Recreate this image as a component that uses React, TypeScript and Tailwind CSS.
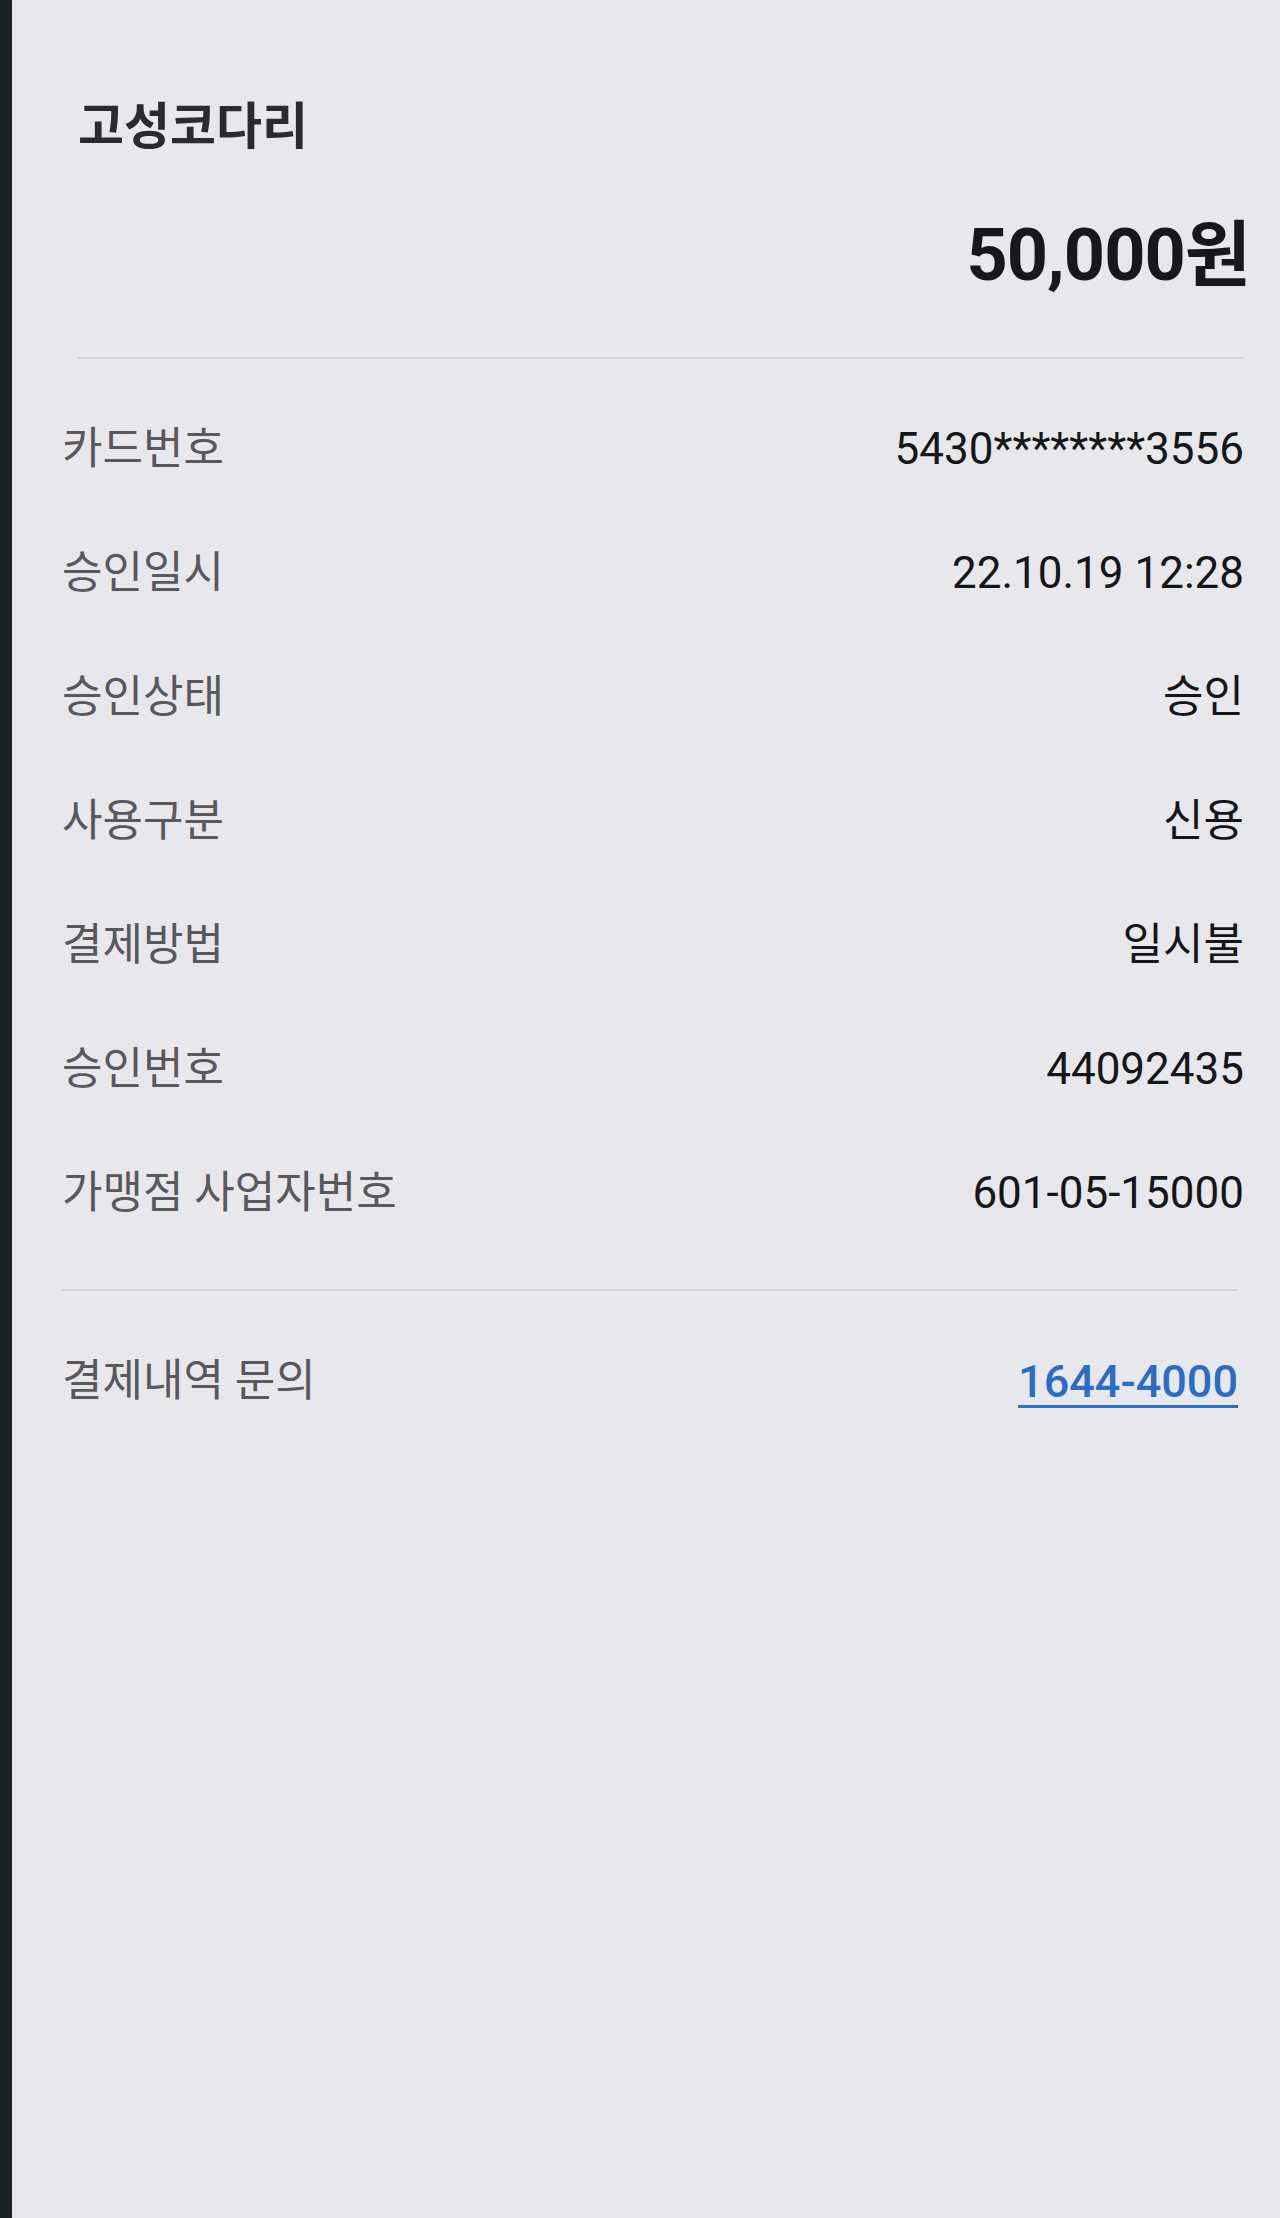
export default function App() {
  const rows = [
    { label: "카드번호", value: "5430********3556" },
    { label: "승인일시", value: "22.10.19 12:28" },
    { label: "승인상태", value: "승인" },
    { label: "사용구분", value: "신용" },
    { label: "결제방법", value: "일시불" },
    { label: "승인번호", value: "44092435" },
    { label: "가맹점 사업자번호", value: "601-05-15000" },
  ];

  return (
    <div
      className="flex min-h-[2218px] w-full bg-[#e8e7eb]"
      style={{ fontFamily: '"Roboto", "Noto Sans CJK KR", sans-serif' }}
    >
      {/* phone edge */}
      <div className="w-[12px] shrink-0 bg-[#1b2226]" />

      <div className="flex flex-1 flex-col pl-[50px] pr-[36px]">
        {/* merchant name */}
        <div className="pl-[16px] pt-[97px] text-[50px] font-semibold leading-[60px] text-[#2a2b2e]">
          고성코다리
        </div>

        {/* amount */}
        <div className="-mr-[6px] mt-[58px] text-right text-[72px] font-bold leading-[82px] tracking-[-1px] text-[#16181a]">
          50,000원
        </div>

        <div className="ml-[16px] mt-[60px] h-[2px] bg-[#d6d5da]" />

        {/* details */}
        <div className="flex flex-col pt-[28px]">
          {rows.map((row) => (
            <div key={row.label} className="flex h-[124px] items-center justify-between">
              <span className="text-[44px] leading-none text-[#58585d]">{row.label}</span>
              <span className="text-[44px] leading-none text-[#151618]">{row.value}</span>
            </div>
          ))}
        </div>

        <div className="mr-[6px] mt-[34px] h-[2px] bg-[#d6d5da]" />

        <div className="mt-[28px] flex h-[124px] items-center justify-between">
          <span className="text-[44px] leading-none text-[#58585d]">결제내역 문의</span>
          <a
            href="#"
            className="mr-[6px] text-[45px] font-medium leading-none text-[#2b6cc4] underline decoration-[3px] underline-offset-[8px]"
          >
            1644-4000
          </a>
        </div>
      </div>
    </div>
  );
}
